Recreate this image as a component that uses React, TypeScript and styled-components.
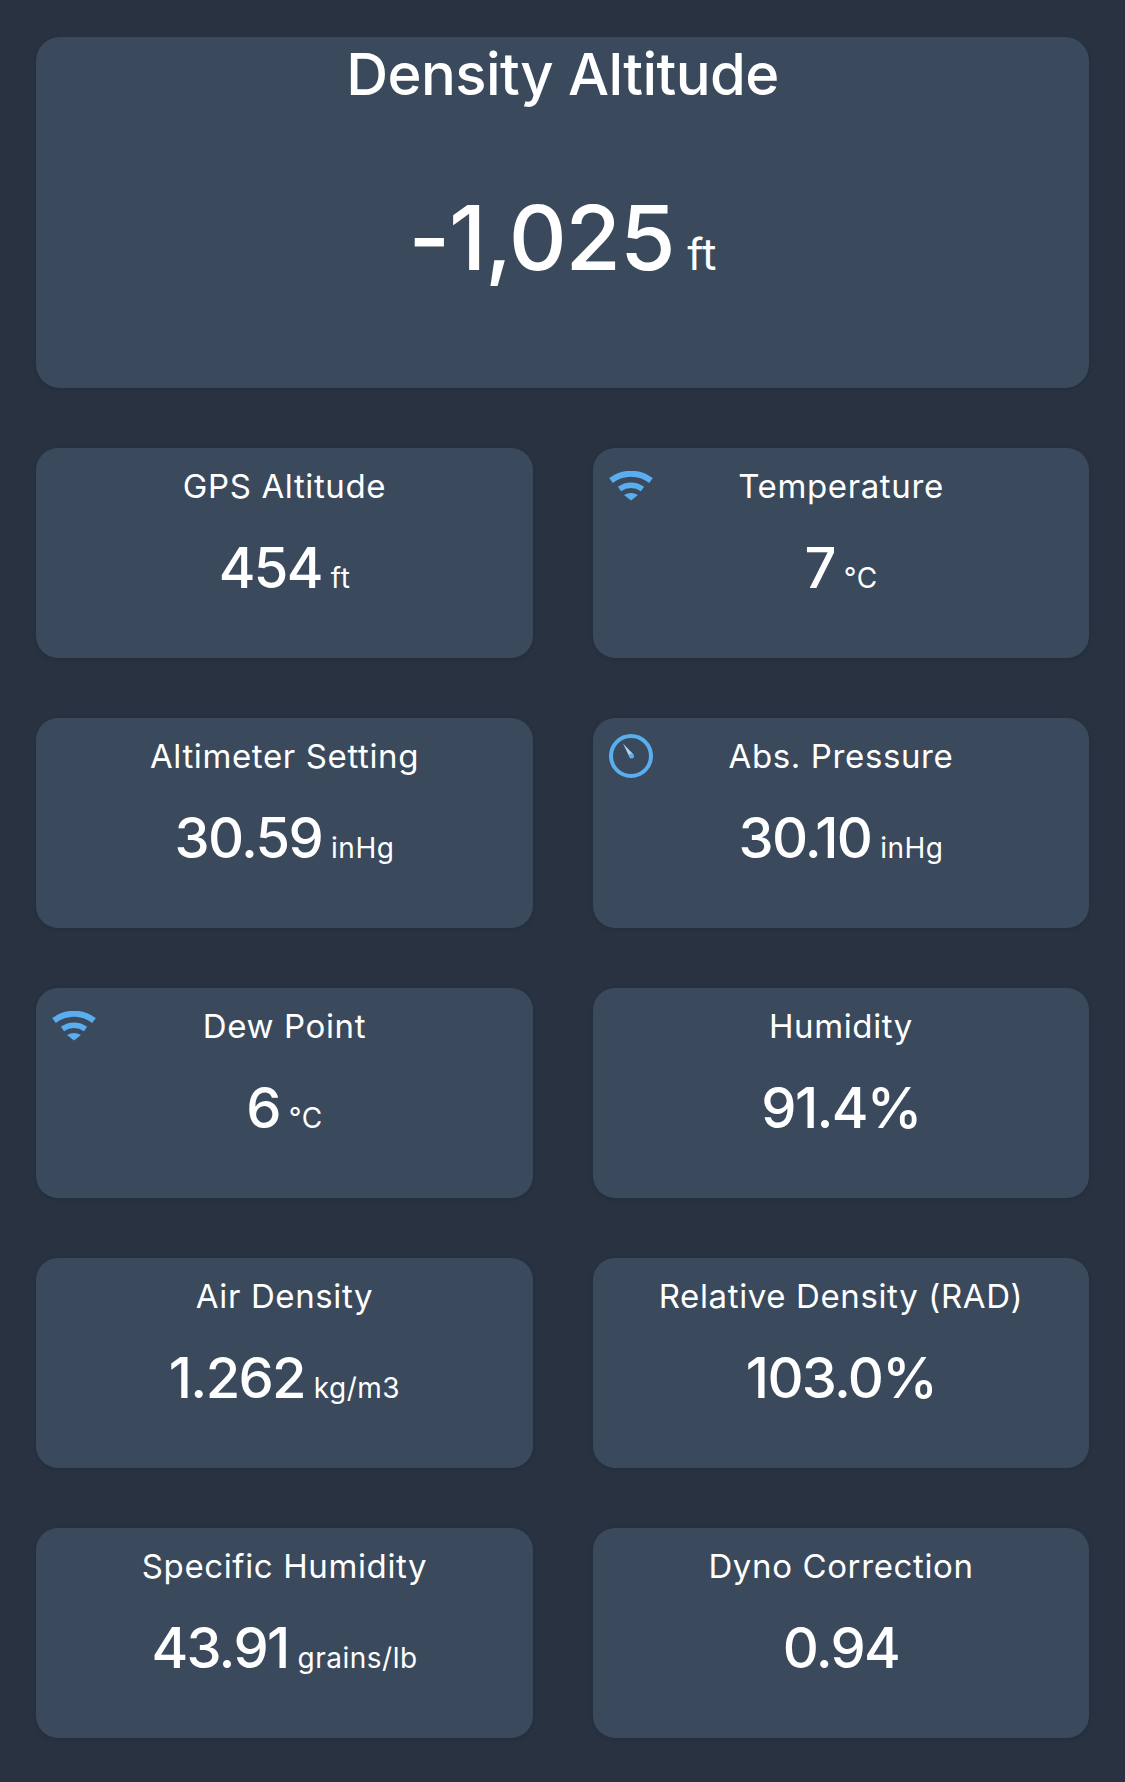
import { FC, ReactNode } from 'react';
import styled, { createGlobalStyle } from 'styled-components';

type IconName = 'wifi' | 'gauge';

interface Reading {
  title: string;
  value: string;
  unit?: string;
  icon?: IconName;
}

const READINGS: Reading[] = [
  { title: 'GPS Altitude', value: '454', unit: 'ft' },
  { title: 'Temperature', value: '7', unit: '°C', icon: 'wifi' },
  { title: 'Altimeter Setting', value: '30.59', unit: 'inHg' },
  { title: 'Abs. Pressure', value: '30.10', unit: 'inHg', icon: 'gauge' },
  { title: 'Dew Point', value: '6', unit: '°C', icon: 'wifi' },
  { title: 'Humidity', value: '91.4%' },
  { title: 'Air Density', value: '1.262', unit: 'kg/m3' },
  { title: 'Relative Density (RAD)', value: '103.0%' },
  { title: 'Specific Humidity', value: '43.91', unit: 'grains/lb' },
  { title: 'Dyno Correction', value: '0.94' },
];

const WifiIcon: FC = () => (
  <svg width="46" height="30" viewBox="0 0 46 30" fill="none">
    <path d="M3 9.5C15 .5 31 .5 43 9.5" stroke="#5aaeef" strokeWidth="6" />
    <path d="M11.5 18C18.5 13 27.5 13 34.5 18" stroke="#5aaeef" strokeWidth="5.5" />
    <path d="M16 24C20.5 21.2 25.5 21.2 30 24L23 29.5Z" fill="#5aaeef" />
  </svg>
);

const GaugeIcon: FC = () => (
  <svg width="46" height="46" viewBox="0 0 46 46" fill="none">
    <circle cx="23" cy="23" r="20" stroke="#5aaeef" strokeWidth="4" />
    <path d="M15 10.5L25.5 21.5L21.5 24Z" fill="#a9d3f3" />
    <circle cx="23.5" cy="23" r="2.5" fill="#5aaeef" />
  </svg>
);

const ICONS: Record<IconName, ReactNode> = {
  wifi: <WifiIcon />,
  gauge: <GaugeIcon />,
};

const App: FC = () => (
  <>
    <GlobalStyle />
    <Page>
      <HeroCard>
        <HeroTitle>Density Altitude</HeroTitle>
        <HeroValue>
          -1,025<HeroUnit>ft</HeroUnit>
        </HeroValue>
      </HeroCard>
      <Grid>
        {READINGS.map((r) => (
          <Card key={r.title}>
            {r.icon && <IconSlot $icon={r.icon}>{ICONS[r.icon]}</IconSlot>}
            <CardTitle>{r.title}</CardTitle>
            <CardValue>
              {r.value}
              {r.unit && <CardUnit>{r.unit}</CardUnit>}
            </CardValue>
          </Card>
        ))}
      </Grid>
    </Page>
  </>
);

const GlobalStyle = createGlobalStyle`
  html, body {
    margin: 0;
    padding: 0;
    background: #283240;
  }
`;

const Page = styled.div`
  box-sizing: border-box;
  width: 1125px;
  height: 1782px;
  padding: 37px 36px 0;
  background: #283240;
  color: #fff;
  font-family: Inter, 'Liberation Sans', sans-serif;
  overflow: hidden;
`;

const HeroCard = styled.section`
  box-sizing: border-box;
  height: 351px;
  padding-top: 2px;
  background: #3a4a5c;
  border-radius: 24px;
  text-align: center;
  box-shadow: 0 1px 4px rgba(0, 0, 0, 0.12);
`;

const HeroTitle = styled.h1`
  margin: 0;
  font-size: 58px;
  line-height: 70px;
  font-weight: 500;
  letter-spacing: -0.6px;
`;

const HeroValue = styled.div`
  margin-top: 75px;
  font-size: 90px;
  line-height: 108px;
  font-weight: 500;
  letter-spacing: -1.2px;
`;

const HeroUnit = styled.span`
  margin-left: 13px;
  font-size: 44px;
  font-weight: 400;
  letter-spacing: 0;
`;

const Grid = styled.div`
  display: grid;
  grid-template-columns: 497px 496px;
  grid-auto-rows: 210px;
  column-gap: 60px;
  row-gap: 60px;
  margin-top: 60px;
`;

const Card = styled.article`
  position: relative;
  box-sizing: border-box;
  padding-top: 17px;
  background: #3a4a5c;
  border-radius: 22px;
  text-align: center;
  box-shadow: 0 1px 4px rgba(0, 0, 0, 0.12);
`;

const IconSlot = styled.div<{ $icon: IconName }>`
  position: absolute;
  top: ${({ $icon }) => ($icon === 'wifi' ? '23px' : '15px')};
  left: 15px;
  line-height: 0;
`;

const CardTitle = styled.h2`
  margin: 0;
  font-size: 33px;
  line-height: 42px;
  font-weight: 400;
  letter-spacing: 0.62px;
`;

const CardValue = styled.div`
  margin-top: 27px;
  font-size: 56px;
  line-height: 68px;
  font-weight: 500;
  letter-spacing: -1.7px;
`;

const CardUnit = styled.span`
  margin-left: 9px;
  font-size: 28px;
  font-weight: 400;
  letter-spacing: 0.5px;
`;

export default App;
